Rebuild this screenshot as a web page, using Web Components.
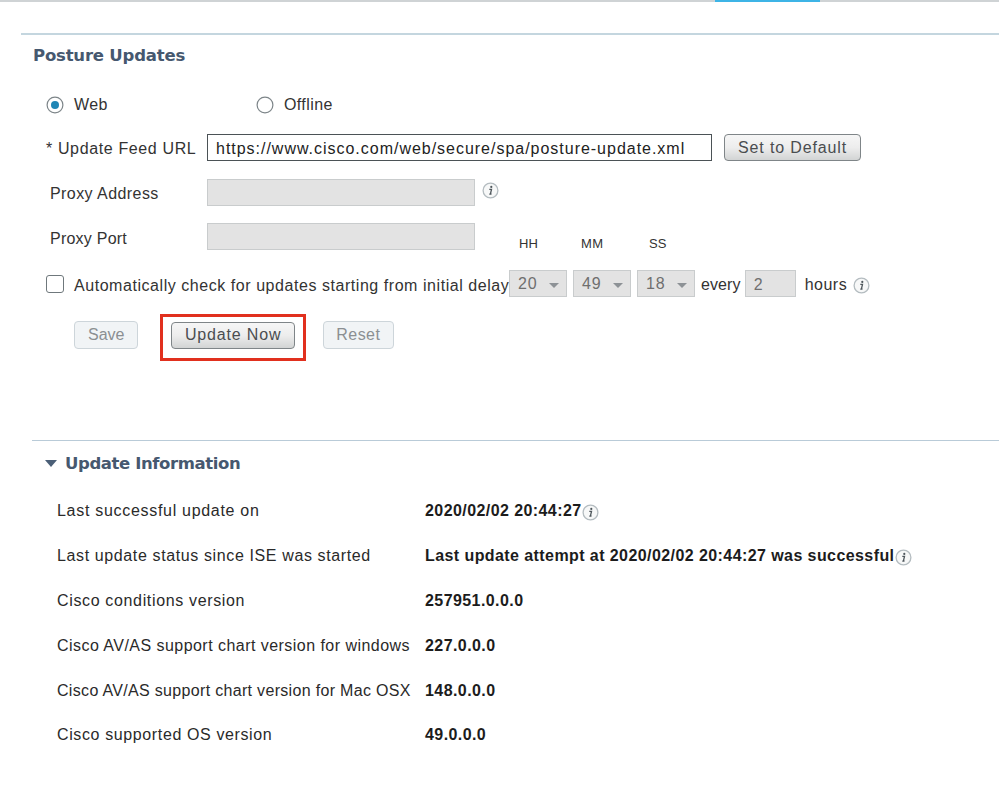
<!DOCTYPE html>
<html lang="en"><head><meta charset="utf-8"><title>Posture Updates</title>
<style>html,body{margin:0;background:#fff}body{font:16px "Liberation Sans",Arial,sans-serif;color:#333}</style>
</head><body><posture-page></posture-page>
<template id="t-page"><style>
:host{display:block;width:999px;height:803px;overflow:hidden;box-sizing:border-box}
.strip{display:flex;height:2px;background:#cfd3d5}
.strip i{display:block;width:105px;margin-left:715px;background:#3db4e6}
.p1{margin:31px 0 0 21px}
.p2{margin:0 0 0 32px;position:relative}
.row{display:flex;align-items:center;height:28px;letter-spacing:.43px}
.r-radio{margin-top:16px;padding-left:25px}
.r-url{margin-top:15px;padding-left:25px}
.r-px1{margin-top:17px;padding-left:29px}
.r-px2{margin-top:16px;padding-left:29px;position:relative}
.r-auto{margin-top:19px;padding-left:25px}
.r-btn{margin-top:23px;padding-left:53px}
.lab{width:157px;flex:none;white-space:nowrap;padding-top:2px}
.r-url .lab{width:161px;letter-spacing:.63px}
.r-px2 .lab{letter-spacing:.23px;padding-top:3px}
.tm{display:flex;align-items:flex-end;height:28px;font-size:13px;letter-spacing:0;color:#333;line-height:15px;margin-left:44px}
.tm span{display:block}
.w1{width:62px}.w2{width:68px;letter-spacing:.5px}
x-radio.off{margin-left:148px}
.ev{margin:0 4px 0 6px;letter-spacing:.1px;padding-top:2px}
.hr{margin:0 6px 0 9px;letter-spacing:.5px;padding-top:1px}
.sp{height:91px}
.rows{padding-top:12px;padding-left:25px;display:flex;flex-direction:column;gap:17px}
.url{letter-spacing:.98px}
.wide{letter-spacing:.86px;margin-top:-1px}
.now{letter-spacing:.83px;padding:0 12.5px 1px}
.save{letter-spacing:0}
.rst{padding:0 12.5px}
.last{margin-top:-1px}
</style>
<div class="strip"><i></i></div>
<x-panel class="p1" heading="Posture Updates" ls="-.2" pad="12">
<div class="row r-radio"><x-radio checked>Web</x-radio><x-radio class="off">Offline</x-radio></div>
<div class="row r-url"><span class="lab">* Update Feed URL</span><x-field class="url" w="505" active>https://www.cisco.com/web/secure/spa/posture-update.xml</x-field><x-btn class="wide" style="margin-left:12px">Set to Default</x-btn></div>
<div class="row r-px1"><span class="lab">Proxy Address</span><x-field w="268"></x-field><info-icon style="margin:-6px 0 0 7px"></info-icon></div>
<div class="row r-px2"><span class="lab">Proxy Port</span><x-field w="268"></x-field><div class="tm"><span class="w1">HH</span><span class="w2">MM</span><span>SS</span></div></div>
<div class="row r-auto"><x-check>Automatically check for updates starting from initial delay</x-check><x-select>20</x-select><x-select style="margin-left:6px">49</x-select><x-select style="margin-left:6px">18</x-select><span class="ev">every</span><x-field w="51" dis>2</x-field><span class="hr">hours</span><info-icon style="margin:2px 0 0 0"></info-icon></div>
<div class="row r-btn"><x-btn class="save" dis>Save</x-btn><x-btn class="now" hi style="margin-left:33px">Update Now</x-btn><x-btn class="rst" dis style="margin-left:28px">Reset</x-btn></div>
<div class="sp"></div>
</x-panel>
<x-panel class="p2" heading="Update Information" arrow ls="-.4" pad="13">
<div class="rows">
<info-row ls=".7" label="Last successful update on" tip>2020/02/02 20:44:27</info-row>
<info-row ls=".62" label="Last update status since ISE was started" tip>Last update attempt at 2020/02/02 20:44:27 was successful</info-row>
<info-row ls=".65" label="Cisco conditions version">257951.0.0.0</info-row>
<info-row ls=".46" label="Cisco AV/AS support chart version for windows">227.0.0.0</info-row>
<info-row ls=".32" label="Cisco AV/AS support chart version for Mac OSX">148.0.0.0</info-row>
<info-row class="last" ls=".62" label="Cisco supported OS version">49.0.0.0</info-row>
</div>
</x-panel>
</template>
<script>
const html=(s)=>{const t=document.createElement('template');t.innerHTML=s;return t.content};
class Base extends HTMLElement{constructor(){super();this.attachShadow({mode:'open'})}
connectedCallback(){if(!this.shadowRoot.hasChildNodes())this.shadowRoot.append(html(this.tpl()))}}
customElements.define('posture-page',class extends Base{tpl(){return document.getElementById('t-page').innerHTML}});
customElements.define('x-panel',class extends Base{tpl(){const a=this.hasAttribute('arrow');return `<style>
:host{display:block;border-top:${a?1:2}px solid ${a?'#b9cbd8':'#c4d6df'}}
.h{display:flex;align-items:center;height:${a?44:40}px;padding-left:${this.getAttribute('pad')}px;font:bold 16.5px "DejaVu Sans","Liberation Sans",sans-serif;color:#46586f;letter-spacing:${this.getAttribute('ls')}px}
i{display:${a?'block':'none'};width:0;height:0;border:6px solid transparent;border-top:7px solid #4b5f77;border-bottom:0;margin:1px 8px 0 0}
</style><div class="h"><i></i><span>${this.getAttribute('heading')}</span></div><slot></slot>`}});
customElements.define('x-radio',class extends Base{tpl(){const c=this.hasAttribute('checked');return `<style>
:host{display:inline-flex;align-items:center}
svg{display:block;margin-right:10px}
</style><svg width="18" height="18" viewBox="0 0 18 18"><circle cx="9" cy="9" r="7.9" fill="#fff" stroke="#7d8589" stroke-width="1.2"/>${c?'<circle cx="9" cy="9" r="4" fill="#1f86b5"/>':''}</svg><slot></slot>`}});
customElements.define('x-check',class extends Base{tpl(){return `<style>
:host{display:inline-flex;align-items:center;white-space:nowrap;width:463px;flex:none;letter-spacing:.55px}
b{display:block;box-sizing:border-box;width:18px;height:18px;border:1.5px solid #6f787c;border-radius:3px;margin-right:10px;flex:none;background:#fff}
span{padding-top:3px}
</style><b></b><span><slot></slot></span>`}});
customElements.define('x-field',class extends Base{tpl(){const a=this.hasAttribute('active');return `<style>
:host{display:flex;align-items:center;box-sizing:border-box;height:27px;width:${this.getAttribute('w')}px;flex:none;margin-top:-1px;padding:2px 0 0 8px;white-space:nowrap;
border:${a?'1px solid #4b5256':'1px solid #c9cccd'};background:${a?'#fff':'#e3e3e3'};color:${a?'#222':'#6f6f6f'};${a?'border-width:1.5px 1.5px 1.5px 1px;':''}}
</style><slot></slot>`}});
customElements.define('x-select',class extends Base{tpl(){return `<style>
:host{display:flex;align-items:center;justify-content:space-between;box-sizing:border-box;height:27px;width:58px;flex:none;margin-top:-1px;padding:1px 7px 0 8px;border:1px solid #c9cccd;background:#e3e3e3;color:#6f6f6f;letter-spacing:.9px}
i{display:block;width:0;height:0;border:5px solid transparent;border-top:5px solid #8d9296;border-bottom:0;margin-top:2px}
</style><slot></slot><i></i>`}});
customElements.define('x-btn',class extends Base{tpl(){const d=this.hasAttribute('dis'),h=this.hasAttribute('hi');return `<style>
:host{display:inline-flex;align-items:center;justify-content:center;position:relative;box-sizing:border-box;height:${d?28:27}px;padding:0 13px;flex:none;border:1px solid ${d?'#cdd5da':'#7f8588'};border-radius:4px;white-space:nowrap;
background:${d?'#f1f4f6':'linear-gradient(#f6f6f6 0,#ededed 50%,#d2d4d4 100%)'};color:${d?'#8b8f92':'#4a4d50'};${h?'top:.5px;':''}}
${h?':host::after{content:"";position:absolute;inset:-9px -12px -13px -12px;border:3px solid #e1301e}':''}
</style><slot></slot>`}});
customElements.define('info-icon',class extends Base{tpl(){return `<style>:host{display:block;width:17px;height:17px;flex:none}svg{display:block}</style>
<svg width="17" height="17" viewBox="0 0 17 17"><circle cx="8.5" cy="8.5" r="7.4" fill="#f7f8f8" stroke="#b4bcc0" stroke-width="1.3"/><circle cx="9.3" cy="4.9" r="1.1" fill="#4e565b"/><path d="M7.3 7.4h2.2l-1 4.1.9 0M7.3 12.2h2.2" fill="none" stroke="#4e565b" stroke-width="1.3"/></svg>`}});
customElements.define('info-row',class extends Base{tpl(){return `<style>
:host{display:flex;align-items:center;height:28px;white-space:nowrap;color:#2a2a2a}
.l{width:368px;flex:none;font-size:16px;letter-spacing:${this.getAttribute('ls')}px}
.v{font-weight:bold;color:#1c1c1c;letter-spacing:.42px}
info-icon{margin-top:3px}
</style><span class="l">${this.getAttribute('label')}</span><span class="v"><slot></slot></span>${this.hasAttribute('tip')?'<info-icon></info-icon>':''}`}});
</script></body></html>
